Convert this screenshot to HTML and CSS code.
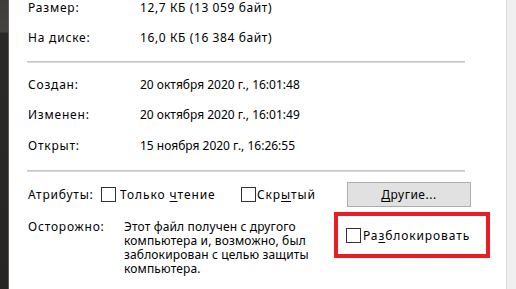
FILE: index.html
```html
<!DOCTYPE html>
<html lang="ru">
<head>
<meta charset="utf-8">
<title>Свойства</title>
<link rel="stylesheet" href="styles.css">
</head>
<body>
<div class="frame">
  <div class="leftbar"></div>
  <main class="panel">
    <div class="row first"><span class="lbl">Размер:</span><span class="size">12,7 КБ (13 059 байт)</span></div>
    <div class="row"><span class="lbl">На диске:</span><span class="size">16,0 КБ (16 384 байт)</span></div>
    <div class="sep sep1"></div>
    <div class="row r-created"><span class="lbl">Создан:</span><span class="date">20 октября 2020 г., 16:01:48</span></div>
    <div class="row r-changed"><span class="lbl">Изменен:</span><span class="date">20 октября 2020 г., 16:01:49</span></div>
    <div class="row r-opened"><span class="lbl">Открыт:</span><span class="date">15 ноября 2020 г., 16:26:55</span></div>
    <div class="sep sep2"></div>
    <div class="attrs">
      <span class="lbl">Атрибуты:</span>
      <label class="check c1"><span class="box"></span><span class="ctext">Только <u>ч</u>тение</span></label>
      <label class="check c2"><span class="box"></span><span class="ctext">Скр<u>ы</u>тый</span></label>
      <button class="btn"><u>Д</u>ругие...</button>
    </div>
    <div class="caution">
      <span class="lbl">Осторожно:</span>
      <p class="note">Этот файл получен с другого<br>компьютера и, возможно, был<br>заблокирован с целью защиты<br>компьютера.</p>
      <div class="highlight">
        <label class="check c3"><span class="box"></span><span class="ctext">Ра<u>з</u>блокировать</span></label>
      </div>
    </div>
  </main>
  <div class="rightbar"></div>
</div>
</body>
</html>
```

FILE: styles.css
```css
* { box-sizing: border-box; }
html, body { margin: 0; padding: 0; background: #fff; }
body {
  font-family: "Noto Sans", "Open Sans", sans-serif;
  font-size: 12px;
  color: #000;
  overflow: hidden;
}
.frame {
  display: flex;
  width: 516px;
  height: 289px;
}
.leftbar {
  width: 9px;
  flex: none;
  background: linear-gradient(to bottom, #3e3d3a 0, #45433f 32px, #2a2927 33px, #262524 100%);
  border-right: 1px solid #5a5a5a;
}
.rightbar {
  width: 10px;
  flex: none;
  background: #f0f0f0;
  border-left: 1px solid #dcdcdc;
}
.panel {
  flex: 1;
  padding-left: 19px;
  display: flex;
  flex-direction: column;
}
.lbl { letter-spacing: 0.8px; }
.size { letter-spacing: 0.6px; }
.date { letter-spacing: 0; }
.ctext { letter-spacing: 0.9px; }
.row {
  display: grid;
  grid-template-columns: 112px 1fr;
  height: 16px;
  line-height: 16px;
  white-space: nowrap;
  margin-top: 14px;
}
.row.first { margin-top: 0; }
.sep {
  width: 438px;
  height: 2px;
  margin-left: -1px;
  background: #c6c6c6;
  border-bottom: 1px solid #d9d9d9;
}
.sep1 { margin-top: 15px; }
.r-created { margin-top: 14px; }
.r-opened { margin-top: 15px; }
.sep2 { margin-top: 16px; }
.attrs {
  margin-top: 10px;
  height: 25px;
  display: grid;
  grid-template-columns: 73px 140px 106px 124px;
  align-items: center;
  line-height: 16px;
  white-space: nowrap;
}
.check {
  display: flex;
  align-items: center;
  gap: 4px;
}
.c2 { gap: 1px; }
.box {
  width: 15px;
  height: 15px;
  border: 1px solid #333;
  background: #fff;
  flex: none;
}
.btn {
  height: 25px;
  width: 124px;
  background: #e1e1e1;
  border: 1px solid #adadad;
  font: inherit;
  letter-spacing: 0.5px;
  color: #000;
  padding: 0;
  line-height: 16px;
}
u { text-underline-offset: 2px; }
.caution {
  margin-top: 5px;
  display: grid;
  grid-template-columns: 96px 210px 156px;
  align-items: start;
}
.caution .lbl { margin-top: 8px; line-height: 14px; }
.note {
  margin: 8px 0 0;
  line-height: 14px;
  letter-spacing: 0.15px;
  white-space: nowrap;
}
.highlight {
  width: 156px;
  height: 46px;
  border: 4px solid #ed1c24;
  display: flex;
  align-items: center;
  padding-left: 8px;
  padding-top: 1px;
  white-space: nowrap;
}
.c3 { gap: 2px; }
```
